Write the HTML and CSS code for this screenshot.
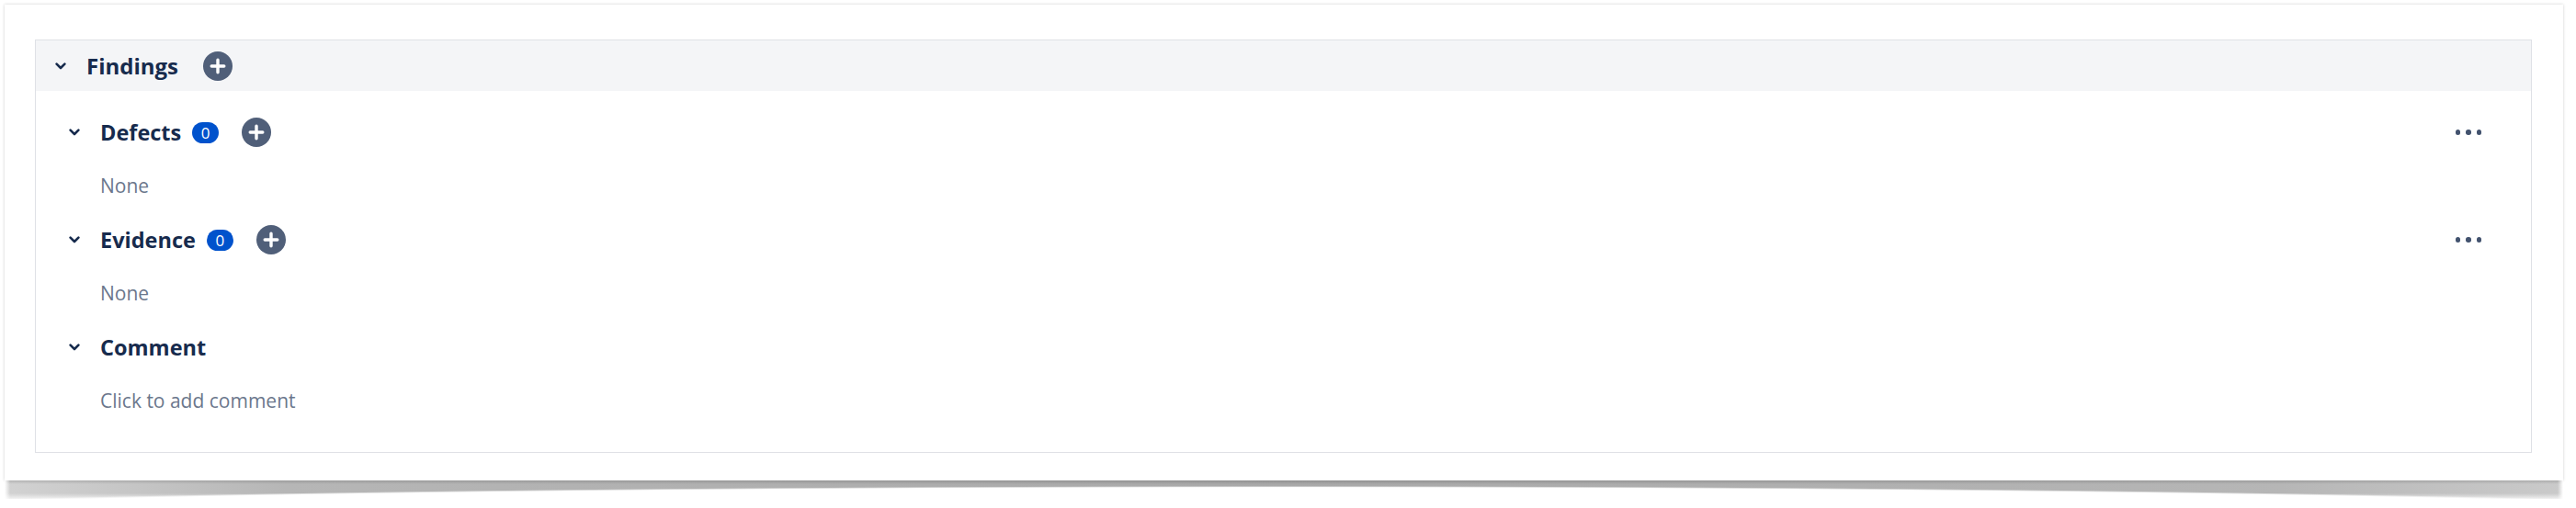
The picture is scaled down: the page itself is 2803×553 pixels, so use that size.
FILE: index.html
```html
<!DOCTYPE html>
<html lang="en">
<head>
    <meta charset="UTF-8">
    <meta name="viewport" content="width=device-width, initial-scale=1.0">
    <title>Findings</title>
    <link rel="stylesheet" href="styles.css">
</head>
<body>
    <div class="sheet">
        <div class="panel">
            <div class="panel-head">
                <span class="chevron">
                    <svg width="12" height="8" viewBox="0 0 12 8"><path d="M1.6 1.6 L6 6 L10.4 1.6" /></svg>
                </span>
                <h2 class="panel-title">Findings</h2>
                <button class="add-btn" title="Add">
                    <svg width="32" height="32" viewBox="0 0 32 32"><circle cx="16" cy="16" r="16" /><path d="M16 9.2 V22.8 M9.2 16 H22.8" /></svg>
                </button>
            </div>

            <div class="panel-body">
                <section class="group">
                    <div class="group-head">
                        <span class="chevron">
                            <svg width="12" height="8" viewBox="0 0 12 8"><path d="M1.6 1.6 L6 6 L10.4 1.6" /></svg>
                        </span>
                        <h3 class="group-title">Defects</h3>
                        <span class="count">0</span>
                        <button class="add-btn" title="Add defect">
                            <svg width="32" height="32" viewBox="0 0 32 32"><circle cx="16" cy="16" r="16" /><path d="M16 9.2 V22.8 M9.2 16 H22.8" /></svg>
                        </button>
                        <button class="more" title="More"><span></span><span></span><span></span></button>
                    </div>
                    <p class="group-body">None</p>
                </section>

                <section class="group">
                    <div class="group-head">
                        <span class="chevron">
                            <svg width="12" height="8" viewBox="0 0 12 8"><path d="M1.6 1.6 L6 6 L10.4 1.6" /></svg>
                        </span>
                        <h3 class="group-title">Evidence</h3>
                        <span class="count">0</span>
                        <button class="add-btn" title="Add evidence">
                            <svg width="32" height="32" viewBox="0 0 32 32"><circle cx="16" cy="16" r="16" /><path d="M16 9.2 V22.8 M9.2 16 H22.8" /></svg>
                        </button>
                        <button class="more" title="More"><span></span><span></span><span></span></button>
                    </div>
                    <p class="group-body">None</p>
                </section>

                <section class="group">
                    <div class="group-head">
                        <span class="chevron">
                            <svg width="12" height="8" viewBox="0 0 12 8"><path d="M1.6 1.6 L6 6 L10.4 1.6" /></svg>
                        </span>
                        <h3 class="group-title">Comment</h3>
                    </div>
                    <p class="group-body">Click to add comment</p>
                </section>
            </div>
        </div>
    </div>
    <div class="sheet-shadow"></div>
</body>
</html>
```

FILE: styles.css
```css
body {
    margin: 0;
    font-family: "Open Sans", "Noto Sans", sans-serif;
    color: #172b4d;
    background-color: #fff;
}
.sheet {
    width: 2784px;
    margin: 5px 0 0 5px;
    padding: 38px 34px 30px 33px;
    box-sizing: border-box;
    background-color: #fff;
    box-shadow: 0 0 3px rgba(0, 0, 0, 0.2);
}
/* lifted paper shadow under the sheet: grey band with an elliptical cut */
.sheet-shadow {
    width: 2784px;
    height: 20px;
    margin-left: 5px;
    background-image:
        radial-gradient(1832px 40px at 50% 46px, #ffffff 96%, rgba(255, 255, 255, 0) 100%),
        linear-gradient(to right, #ffffff, rgba(255, 255, 255, 0) 6px),
        linear-gradient(to left, #ffffff, rgba(255, 255, 255, 0) 6px),
        linear-gradient(to bottom, rgba(0, 0, 0, 0.14), rgba(0, 0, 0, 0) 4px, rgba(255, 255, 255, 0) 14px, rgba(255, 255, 255, 0.7)),
        linear-gradient(to right, #d2d2d2, #b6b6b6 11%, #a8a8a8 50%, #b6b6b6 89%, #cacaca);
}
.panel {
    border: 1px solid #dfe1e6;
}
.panel-head {
    display: flex;
    align-items: center;
    height: 55px;
    padding-left: 21px;
    background-color: #f4f5f7;
}
.chevron {
    display: flex;
    width: 12px;
    height: 8px;
}
.chevron path {
    fill: none;
    stroke: #172b4d;
    stroke-width: 2.6;
    stroke-linecap: round;
    stroke-linejoin: round;
}
.panel-title {
    margin: 0 27px 0 22px;
    font-size: 24px;
    font-weight: 700;
    line-height: 40px;
}
button {
    padding: 0;
    border: none;
    background: none;
    cursor: pointer;
}
.add-btn {
    display: flex;
    width: 32px;
    height: 32px;
}
.add-btn circle {
    fill: #505f79;
}
.add-btn path {
    stroke: #fff;
    stroke-width: 3.4;
    stroke-linecap: round;
}
.panel-body {
    padding: 25px 54px 41px 36px;
}
.group + .group {
    margin-top: 24px;
}
.group-head {
    display: flex;
    align-items: center;
    height: 40px;
}
.group-title {
    margin: 0 12px 0 22px;
    font-size: 23.5px;
    font-weight: 700;
    line-height: 40px;
}
.count {
    display: flex;
    align-items: center;
    justify-content: center;
    min-width: 29px;
    height: 23px;
    margin-right: 25px;
    border-radius: 12px;
    background-color: #0052cc;
    color: #fff;
    font-size: 17px;
    line-height: 1;
}
.more {
    display: flex;
    gap: 6px;
    margin-left: auto;
}
.more span {
    width: 5.5px;
    height: 5.5px;
    border-radius: 50%;
    background-color: #42526e;
}
.group-body {
    margin: 23px 0 0 34px;
    font-size: 21px;
    line-height: 30px;
    color: #6b778c;
}
```
